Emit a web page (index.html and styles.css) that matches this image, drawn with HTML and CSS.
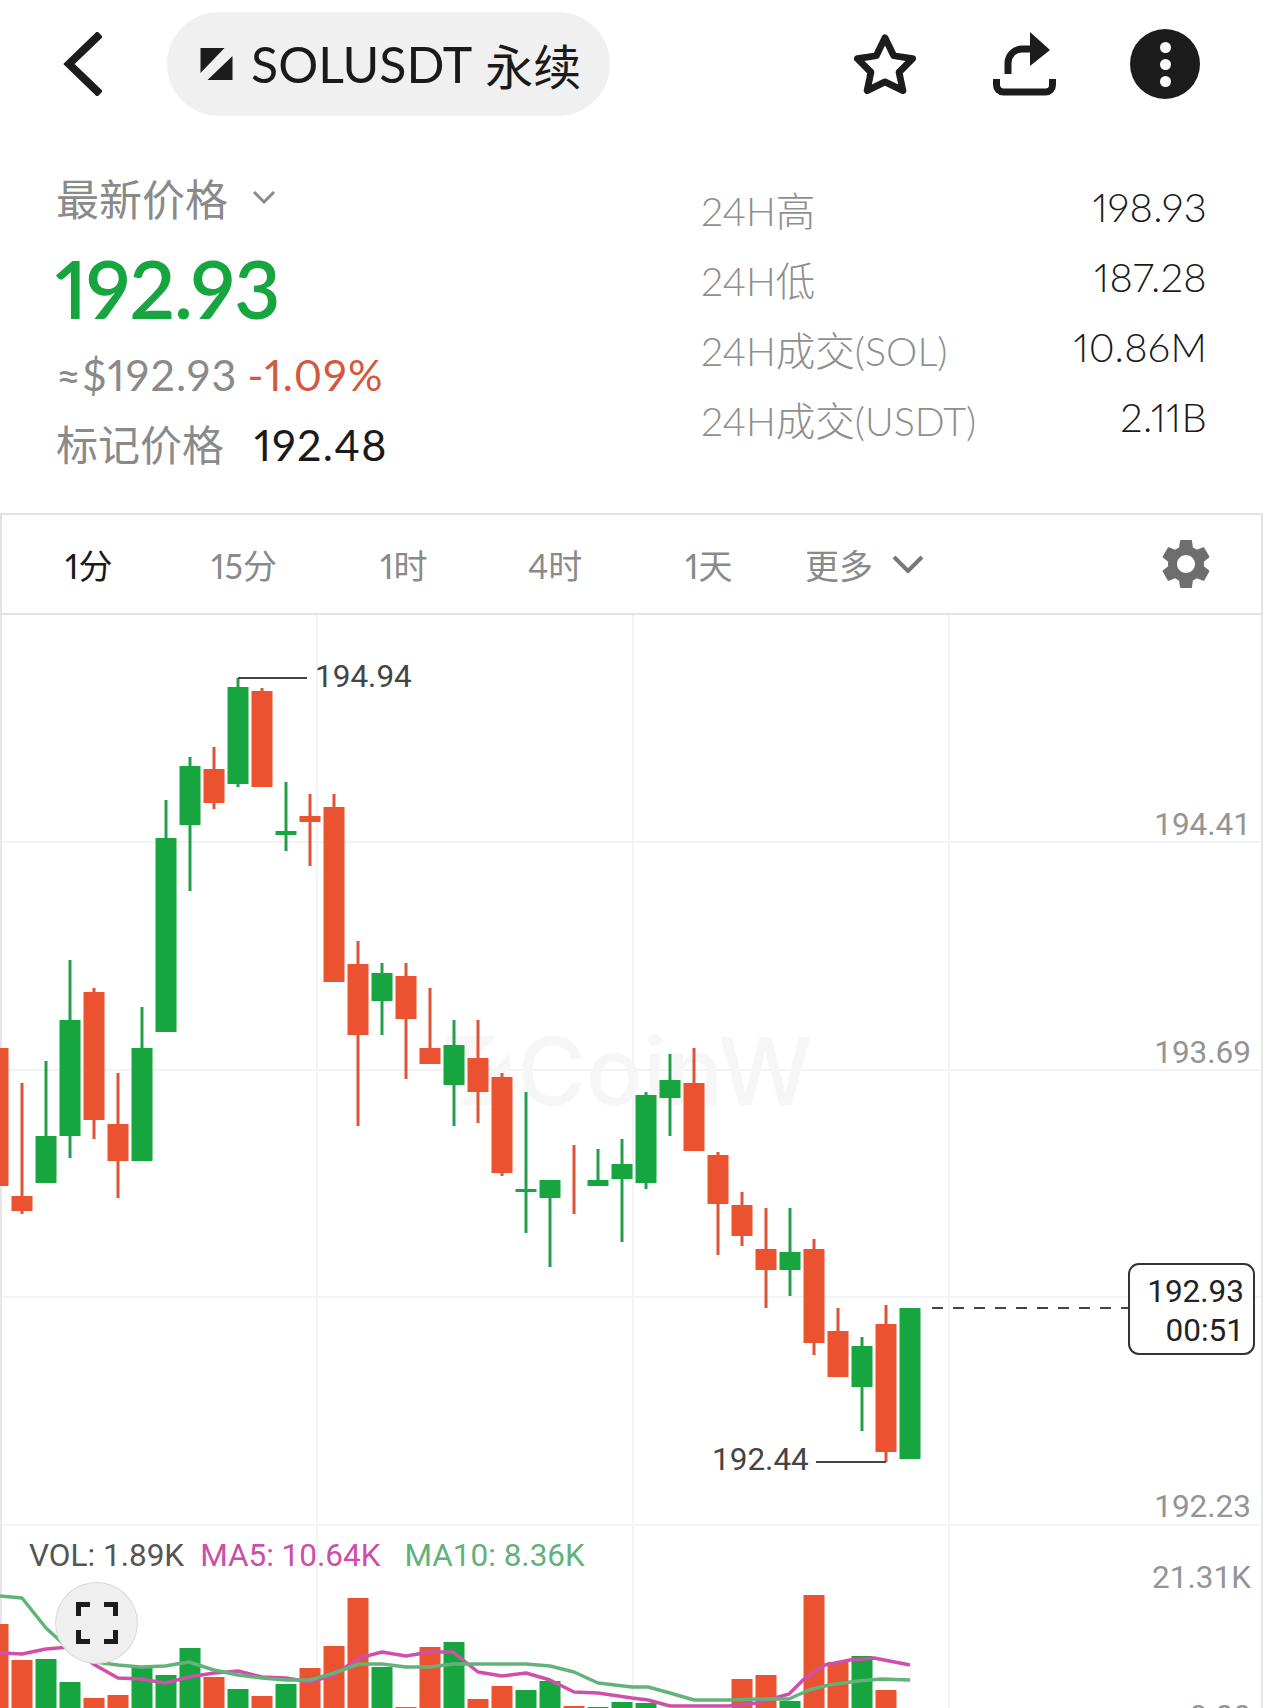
FILE: index.html
```html
<!DOCTYPE html>
<html lang="zh">
<head>
  <meta charset="UTF-8">
  <title>SOLUSDT 永续</title>
  <link rel="stylesheet" href="styles.css">
</head>

<body>
  <!-- 顶部导航 -->
  <div class="top-bar">
    <svg class="back-icon" viewBox="0 0 39 64"><path d="M37 2 6 32l31 30"/></svg>
    <div class="symbol-pill">
      <svg class="coin-logo" viewBox="0 0 32 32"><path d="M0 0h24L0 25zM32 8v24H7z"/></svg>
      <span class="symbol-name">SOLUSDT</span>
      <span class="symbol-type">永续</span>
    </div>
    <div class="top-actions">
      <svg class="star-icon" viewBox="0 0 64 64"><path d="M32 5l9 18.500 19.500 3L46.500 40.500 50.500 59.500 32 50.500 13.500 59.500 17.500 40.500 3.500 26.500l19.500-3z"/></svg>
      <svg class="share-icon" viewBox="0 0 63 64">
        <path class="share-line" d="M3.500 47v6a7 7 0 0 0 7 7h42a7 7 0 0 0 7-7v-6M15 42V31a14 14 0 0 1 14-14h9"/>
        <path class="share-head" d="M37 0l20 18-20 16z"/>
      </svg>
      <div class="more-btn"><i></i><i></i><i></i></div>
    </div>
  </div>

  <!-- 行情概览 -->
  <div class="summary">
    <div class="price-box">
      <div class="price-label">最新价格
        <svg class="small-arrow" viewBox="0 0 24 14"><path d="M2 2l10 10L22 2"/></svg>
      </div>
      <div class="last-price">192.93</div>
      <div class="quote-line">≈$192.93<span class="change">-1.09%</span></div>
      <div class="mark-line">标记价格<span class="mark-price">192.48</span></div>
    </div>
    <div class="stats">
      <div class="stat-row"><span class="stat-name">24H高</span><span class="stat-value">198.93</span></div>
      <div class="stat-row"><span class="stat-name">24H低</span><span class="stat-value">187.28</span></div>
      <div class="stat-row"><span class="stat-name">24H成交(SOL)</span><span class="stat-value">10.86M</span></div>
      <div class="stat-row"><span class="stat-name">24H成交(USDT)</span><span class="stat-value">2.11B</span></div>
    </div>
  </div>

  <!-- 周期切换 -->
  <div class="period-tabs">
    <span class="tab active">1分</span>
    <span class="tab">15分</span>
    <span class="tab">1时</span>
    <span class="tab">4时</span>
    <span class="tab">1天</span>
    <span class="tab tab-more">更多
      <svg class="more-arrow" viewBox="0 0 32 18"><path d="M2 2l14 14L30 2"/></svg>
    </span>
    <svg class="gear-icon" viewBox="0 0 24 24"><path d="M19.140 12.940c.04-.3.06-.61.06-.94 0-.32-.02-.64-.07-.94l2.030-1.580c.18-.14.23-.41.12-.61l-1.920-3.320c-.12-.22-.37-.29-.59-.22l-2.390.96c-.5-.38-1.030-.7-1.620-.94l-.36-2.540c-.04-.24-.24-.41-.48-.41h-3.840c-.24 0-.43.17-.47.41l-.36 2.540c-.59.24-1.130.57-1.620.94l-2.390-.96c-.22-.08-.47 0-.59.22L2.740 8.870c-.12.21-.08.47.12.61l2.030 1.580c-.05.3-.09.63-.09.94s.02.64.07.94l-2.030 1.580c-.18.14-.23.41-.12.61l1.920 3.320c.12.22.37.29.59.22l2.390-.96c.5.38 1.030.7 1.620.94l.36 2.540c.05.24.24.41.48.41h3.840c.24 0 .44-.17.47-.41l.36-2.540c.59-.24 1.130-.56 1.620-.94l2.390.96c.22.08.47 0 .59-.22l1.920-3.320c.12-.22.07-.47-.12-.61l-2.010-1.580zM12 15.600c-1.980 0-3.600-1.620-3.600-3.600s1.620-3.600 3.600-3.600 3.600 1.620 3.600 3.600-1.620 3.600-3.600 3.600z"/></svg>
  </div>

  <!-- K线图，坐标按整页像素写 -->
  <div class="chart">
    <svg class="chart-svg" viewBox="0 615 1263 1093" width="1263" height="1093">
      <path class="grid" d="M0 842H1263M0 1070H1263M0 1297H1263M0 1525H1263M317 615V1708M633 615V1708M949 615V1708"/>
      <path class="edge" d="M1 615V1708M1262 615V1708"/>

      <text class="watermark" x="517" y="1105">CoinW</text>
      <path class="watermark-logo" d="M447 1036h50l-50 50zM510 1052v53h-50z"/>

      <!-- 影线 -->
      <path class="wick-up" d="M46 1061V1136M70 960V1158M142 1007V1048M166 800V838M190 757V891M238 678V787M286 782V851M382 963V1035M454 1020V1126M526 1092V1233M550 1180V1267M598 1149V1180M622 1139V1242M646 1092V1189M670 1054V1136M790 1208V1296M862 1337V1431"/>
      <path class="wick-down" d="M22 1083V1214M94 988V1139M118 1073V1198M214 747V809M262 688V691M310 794V866M334 794V807M358 941V1126M406 963V1079M430 988V1048M478 1020V1123M502 1073V1176M574 1145V1214M694 1048V1083M718 1152V1255M742 1192V1246M766 1208V1308M814 1239V1355M838 1308V1331M886 1305V1462"/>

      <!-- 实体 -->
      <path class="bar-up" d="M35.500 1136h21V1183h-21zM59.500 1020h21V1136h-21zM131.500 1048h21V1161h-21zM155.500 838h21V1032h-21zM179.500 766h21V825h-21zM227.500 687h21V784h-21zM275.500 831h21V835h-21zM371.500 973h21V1001h-21zM443.500 1045h21V1085h-21zM515.500 1189h21V1192h-21zM539.500 1180h21V1198h-21zM587.500 1180h21V1186h-21zM611.500 1164h21V1179h-21zM635.500 1095h21V1183h-21zM659.500 1080h21V1098h-21zM779.500 1252h21V1270h-21zM851.500 1346h21V1387h-21zM899.500 1308h21V1459h-21z"/>
      <path class="bar-down" d="M-12.500 1048h21V1186h-21zM11.500 1196h21V1211h-21zM83.500 992h21V1120h-21zM107.500 1124h21V1161h-21zM203.500 769h21V803h-21zM251.500 691h21V787h-21zM299.500 816h21V822h-21zM323.500 807h21V982h-21zM347.500 964h21V1035h-21zM395.500 976h21V1019h-21zM419.500 1048h21V1064h-21zM467.500 1058h21V1092h-21zM491.500 1077h21V1173h-21zM683.500 1083h21V1151h-21zM707.500 1155h21V1204h-21zM731.500 1205h21V1236h-21zM755.500 1249h21V1270h-21zM803.500 1249h21V1343h-21zM827.500 1331h21V1377h-21zM875.500 1324h21V1452h-21z"/>

      <!-- 最高最低标注 -->
      <path class="mark-leader" d="M238 678H307M816 1462H886"/>
      <text class="mark-text" x="315" y="687">194.94</text>
      <text class="mark-text" x="712" y="1470">192.44</text>
      <path class="last-line" d="M932 1308H1128"/>

      <!-- 成交量 -->
      <path class="bar-up" d="M35.500 1659h21V1708h-21zM59.500 1682h21V1708h-21zM131.500 1668h21V1708h-21zM155.500 1675h21V1708h-21zM179.500 1648h21V1708h-21zM227.500 1689h21V1708h-21zM275.500 1684h21V1708h-21zM371.500 1667h21V1708h-21zM443.500 1642h21V1708h-21zM515.500 1690h21V1708h-21zM539.500 1681h21V1708h-21zM587.500 1707h21V1708h-21zM611.500 1702h21V1708h-21zM635.500 1703h21V1708h-21zM779.500 1701h21V1708h-21zM851.500 1656h21V1708h-21z"/>
      <path class="bar-down" d="M-12.500 1624h21V1708h-21zM11.500 1660h21V1708h-21zM83.500 1698h21V1708h-21zM107.500 1695h21V1708h-21zM203.500 1677h21V1708h-21zM251.500 1696h21V1708h-21zM299.500 1668h21V1708h-21zM323.500 1646h21V1708h-21zM347.500 1598h21V1708h-21zM395.500 1707h21V1708h-21zM419.500 1647h21V1708h-21zM467.500 1699h21V1708h-21zM491.500 1686h21V1708h-21zM563.500 1706h21V1708h-21zM731.500 1679h21V1708h-21zM755.500 1675h21V1708h-21zM803.500 1595h21V1708h-21zM827.500 1662h21V1708h-21zM875.500 1690h21V1708h-21z"/>
      <polyline class="ma-line ma5" points="0,1653 22,1654 46,1649 70,1647 95,1665 118,1678 141,1679 165,1683 189,1677 214,1673 238,1671 262,1677 286,1678 310,1682 334,1675 359,1658 382,1652 406,1656 430,1652 453,1652 478,1672 502,1676 526,1673 550,1680 574,1692 598,1693 632,1698 648,1700 670,1706 729,1706 757,1703 789,1694 803,1680 825,1665 850,1660 874,1658 910,1665"/>
      <polyline class="ma-line ma10" points="0,1596 22,1598 46,1628 70,1650 95,1662 118,1665 141,1667 165,1666 189,1662 214,1670 238,1675 262,1678 286,1680 310,1680 334,1673 359,1664 382,1664 406,1667 430,1667 453,1664 478,1664 502,1664 526,1664 550,1666 574,1672 598,1683 632,1687 648,1687 670,1693 694,1700 729,1700 757,1699 789,1699 809,1690 829,1685 858,1681 882,1679 910,1680"/>

      <!-- 右侧刻度 -->
      <text class="axis-text" x="1251" y="835">194.41</text>
      <text class="axis-text" x="1251" y="1063">193.69</text>
      <text class="axis-text" x="1251" y="1517">192.23</text>
      <text class="axis-text" x="1251" y="1588">21.31K</text>
      <text class="axis-text" x="1251" y="1727">0.00</text>
    </svg>

    <div class="price-tag">192.93<br>00:51</div>

    <div class="vol-legend">
      <span class="vol-text">VOL: 1.89K</span>
      <span class="ma5-text">MA5: 10.64K</span>
      <span class="ma10-text">MA10: 8.36K</span>
    </div>

    <div class="full-btn">
      <svg class="full-icon" viewBox="0 0 42 42"><path d="M14 2.500H2.500V14M28 2.500H39.500V14M14 39.500H2.500V28M28 39.500H39.500V28"/></svg>
    </div>
  </div>
</body>
</html>
```

FILE: styles.css
```css
/* 全局样式 */
html, body {
  height: 1708px;
  overflow: hidden;
}
body {
  margin: 0;
  background: #fff;
  color: #1a1a1a;
  font-family: Lato, "Noto Sans CJK SC", sans-serif;
  font-variant-numeric: proportional-nums;
}
svg {
  display: block;
}

/* 顶部导航 */
.top-bar {
  display: flex;
  align-items: center;
  height: 128px;
  padding: 0 63px 0 63px;
}
.back-icon {
  width: 39px;
  height: 64px;
  margin-right: 65px;
}
.back-icon path {
  fill: none;
  stroke: #1c1c1c;
  stroke-width: 8;
}
.symbol-pill {
  display: flex;
  align-items: center;
  width: 443px;
  height: 104px;
  box-sizing: border-box;
  padding-left: 33px;
  background: #f0f0f0;
  border-radius: 52px;
}
.coin-logo {
  width: 33px;
  height: 32px;
  margin-right: 18px;
}
.coin-logo path {
  fill: #1c1c1c;
}
.symbol-name {
  font-size: 50px;
  margin-right: 13px;
}
.symbol-type {
  font-size: 48px;
}
.top-actions {
  display: flex;
  align-items: center;
  margin-left: auto;
}
.star-icon {
  width: 62px;
  height: 62px;
  margin-right: 77px;
}
.star-icon path {
  fill: none;
  stroke: #1c1c1c;
  stroke-width: 7;
  stroke-linejoin: round;
}
.share-icon {
  width: 63px;
  height: 64px;
  margin-right: 74px;
}
.share-line {
  fill: none;
  stroke: #1c1c1c;
  stroke-width: 7;
}
.share-head {
  fill: #1c1c1c;
}
.more-btn {
  display: flex;
  flex-direction: column;
  align-items: center;
  justify-content: center;
  gap: 6px;
  width: 70px;
  height: 70px;
  background: #1c1c1c;
  border-radius: 50%;
}
.more-btn i {
  width: 11px;
  height: 11px;
  background: #fff;
  border-radius: 50%;
}

/* 行情概览 */
.summary {
  display: flex;
  justify-content: space-between;
  height: 385px;
  padding: 0 56px;
}
.price-label {
  display: flex;
  align-items: center;
  height: 60px;
  margin-top: 39px;
  font-size: 43px;
  color: #8a8a8a;
}
.small-arrow {
  width: 24px;
  height: 14px;
  margin-left: 24px;
}
.small-arrow path {
  fill: none;
  stroke: #8a8a8a;
  stroke-width: 3;
}
.last-price {
  height: 100px;
  margin: 11px 0 0 -1px;
  font-size: 80px;
  font-weight: 600;
  line-height: 100px;
  letter-spacing: -1px;
  color: #17a53f;
}
.quote-line {
  height: 50px;
  margin-top: 12px;
  font-size: 43px;
  line-height: 50px;
  letter-spacing: 1.200px;
  color: #8a8a8a;
}
.change {
  margin-left: 10px;
  color: #d2593d;
}
.mark-line {
  height: 50px;
  margin-top: 20px;
  font-size: 42px;
  line-height: 50px;
  color: #8a8a8a;
}
.mark-price {
  margin-left: 30px;
  font-size: 43px;
  letter-spacing: 1.300px;
  color: #1a1a1a;
}
.stats {
  width: 506px;
  padding-top: 45px;
}
.stat-row {
  display: flex;
  justify-content: space-between;
  align-items: center;
  height: 70px;
}
.stat-name {
  font-size: 39.500px;
  font-weight: 300;
  color: #8f8f8f;
}
.stat-value {
  margin: 0 0 3px 0;
  font-size: 40px;
  font-weight: 300;
  letter-spacing: .3px;
}

/* 周期切换 */
.period-tabs {
  display: grid;
  grid-template-columns: 146px 169px 148px 157px 120px auto 1fr;
  align-items: center;
  height: 98px;
  padding-left: 63px;
  border: 2px solid #e2e2e2;
}
.tab {
  font-size: 34px;
  color: #8a8a8a;
}
.tab.active {
  color: #1a1a1a;
}
.tab-more {
  display: flex;
  align-items: center;
}
.more-arrow {
  width: 32px;
  height: 18px;
  margin-left: 19px;
}
.more-arrow path {
  fill: none;
  stroke: #777;
  stroke-width: 4;
}
.gear-icon {
  width: 60px;
  height: 60px;
  justify-self: end;
  margin-right: 45px;
}
.gear-icon path {
  fill: #6e6e6e;
}

/* K线图 */
.chart {
  position: relative;
  height: 1093px;
  overflow: hidden;
  font-variant-numeric: normal;
}
.chart-svg {
  position: absolute;
  left: 0;
  top: 0;
}
.grid {
  fill: none;
  stroke: #f3f3f3;
  stroke-width: 2;
}
.edge {
  fill: none;
  stroke: #e6e6e6;
  stroke-width: 2;
}
.watermark {
  font-family: Inter, sans-serif;
  font-size: 94px;
  font-weight: 500;
  fill: #f6f6f6;
}
.watermark-logo {
  fill: #f7f7f7;
}
.bar-up {
  fill: #17a53f;
}
.bar-down {
  fill: #ea5230;
}
.wick-up {
  fill: none;
  stroke: #259f4b;
  stroke-width: 3;
}
.wick-down {
  fill: none;
  stroke: #dd5438;
  stroke-width: 3;
}
.mark-leader {
  fill: none;
  stroke: #444;
  stroke-width: 2;
}
.mark-text {
  font-family: Roboto, sans-serif;
  font-size: 31.500px;
  fill: #444;
}
.last-line {
  fill: none;
  stroke: #444;
  stroke-width: 2;
  stroke-dasharray: 11 10;
}
.axis-text {
  font-family: Roboto, sans-serif;
  font-size: 31.500px;
  fill: #949494;
  text-anchor: end;
}
.ma-line {
  fill: none;
  stroke-width: 3.500;
  stroke-linejoin: round;
}
.ma5 {
  stroke: #cf50ab;
}
.ma10 {
  stroke: #62b27a;
}

/* 现价标签 */
.price-tag {
  position: absolute;
  left: 1128px;
  top: 648px;
  width: 127px;
  height: 92px;
  box-sizing: border-box;
  padding: 7px 9px 0 0;
  border: 2px solid #333;
  border-radius: 11px;
  background: #fff;
  font-family: Roboto, sans-serif;
  font-size: 31.500px;
  line-height: 39px;
  text-align: right;
  color: #222;
}

/* 成交量图例 */
.vol-legend {
  position: absolute;
  left: 29px;
  top: 922px;
  display: flex;
  font-family: Roboto, sans-serif;
  font-size: 31.500px;
}
.vol-text {
  color: #555;
  margin-right: 16px;
}
.ma5-text {
  color: #cc4ea8;
  margin-right: 24px;
}
.ma10-text {
  color: #5fb27a;
}

/* 全屏按钮 */
.full-btn {
  position: absolute;
  left: 55px;
  top: 967px;
  display: flex;
  align-items: center;
  justify-content: center;
  width: 83px;
  height: 82px;
  box-sizing: border-box;
  background: #efefef;
  border: 1.500px solid #d9d9d9;
  border-radius: 50%;
}
.full-icon {
  width: 42px;
  height: 42px;
}
.full-icon path {
  fill: none;
  stroke: #1c1c1c;
  stroke-width: 5;
}
```
